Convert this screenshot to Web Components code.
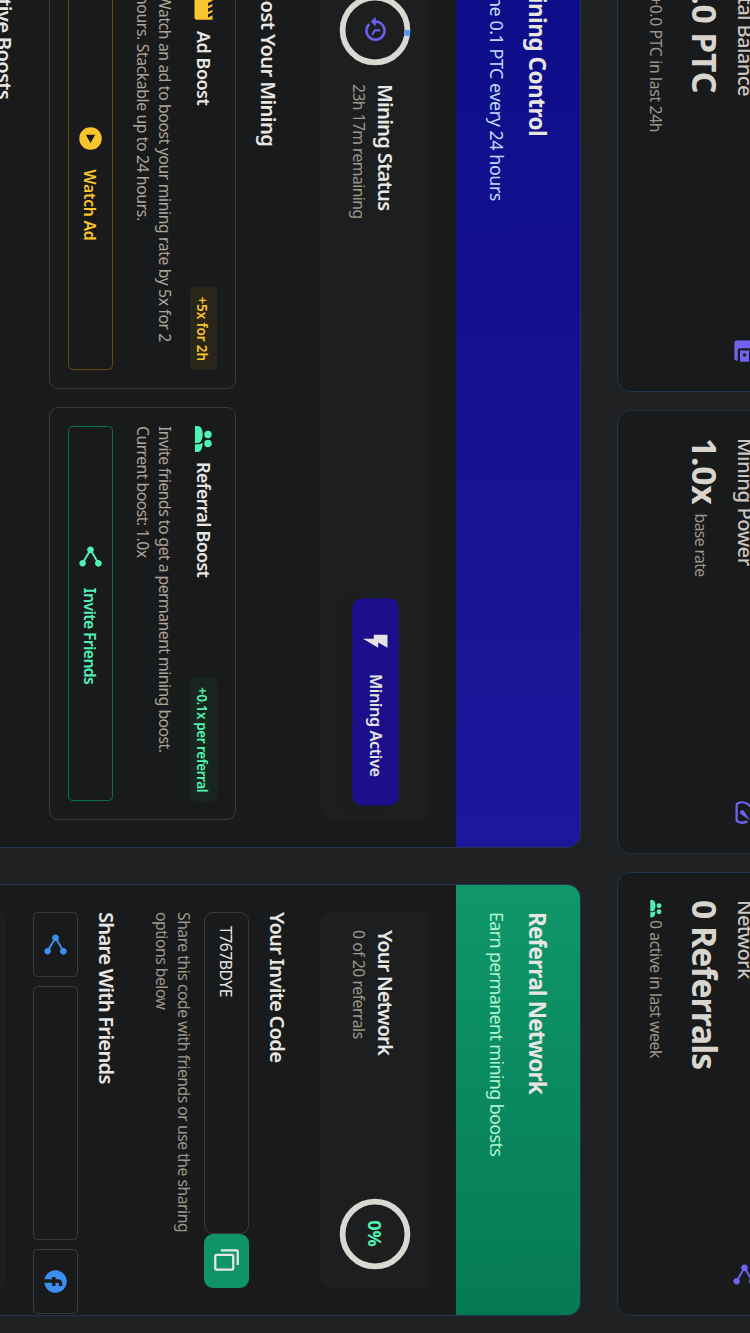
<!DOCTYPE html>
<html lang="en">
<head>
<meta charset="utf-8">
<title>Mining Dashboard</title>
<style>
html,body{margin:0;padding:0;background:#1f2122;overflow:hidden}
body{width:750px;height:1333px;font-family:"Noto Sans","Open Sans",sans-serif;color:#e8e6e3}
</style>
</head>
<body>
<mining-dashboard></mining-dashboard>
<script>
const define = (name, html, setup) => customElements.define(name, class extends HTMLElement {
  constructor(){
    super();
    const t = document.createElement('template');
    t.innerHTML = html;
    this.attachShadow({mode:'open'}).append(t.content.cloneNode(true));
  }
  connectedCallback(){ if (setup) setup(this, this.shadowRoot); }
});

const ICONS = {
  wallet:'M21 18v1c0 1.1-.9 2-2 2H5c-1.11 0-2-.9-2-2V5c0-1.1.89-2 2-2h14c1.1 0 2 .9 2 2v1h-9c-1.11 0-2 .9-2 2v8c0 1.1.89 2 2 2h9zm-9-2h10V8H12v8zm4-2.5c-.83 0-1.5-.67-1.5-1.5s.67-1.5 1.5-1.5 1.5.67 1.5 1.5-.67 1.5-1.5 1.5z',
  speed:'M20.38 8.57l-1.23 1.85a8 8 0 0 1-.22 7.58H5.07A8 8 0 0 1 15.58 6.85l1.85-1.23A10 10 0 0 0 3.35 19a2 2 0 0 0 1.72 1h13.85a2 2 0 0 0 1.74-1 10 10 0 0 0-.27-10.44zm-9.79 6.84a2 2 0 0 0 2.83 0l5.66-8.49-8.49 5.66a2 2 0 0 0 0 2.83z',
  share:'M18 16.08c-.76 0-1.44.3-1.96.77L8.91 12.7c.05-.23.09-.46.09-.7s-.04-.47-.09-.7l7.05-4.11c.54.5 1.25.81 2.04.81 1.66 0 3-1.34 3-3s-1.34-3-3-3-3 1.34-3 3c0 .24.04.47.09.7L8.04 9.81C7.5 9.31 6.79 9 6 9c-1.66 0-3 1.34-3 3s1.34 3 3 3c.79 0 1.5-.31 2.04-.81l7.12 4.16c-.05.21-.08.43-.08.65 0 1.61 1.31 2.92 2.92 2.92s2.92-1.31 2.92-2.92-1.31-2.92-2.92-2.92z',
  people:'M7.5 4.7a3.3 3.3 0 1 1 0 6.6a3.3 3.3 0 1 1 0-6.6zM15.6 4.7a3.3 3.3 0 1 1 0 6.6a3.3 3.3 0 1 1 0-6.6zM0 19.6V17C0 14 3.8 12.7 7.5 12.7S15 14 15 17v2.6zM16.2 19.6V17c0-1.7-.7-3-1.6-4.1C18.8 12.6 23.1 14 23.1 17v2.6z',
  history:'M13 3c-4.97 0-9 4.03-9 9H1l3.89 3.89.07.14L9 12H6c0-3.87 3.13-7 7-7s7 3.13 7 7-3.13 7-7 7c-1.93 0-3.68-.79-4.94-2.06l-1.42 1.42C8.27 19.99 10.51 21 13 21c4.97 0 9-4.03 9-9s-4.03-9-9-9zm-1 5v5l4.28 2.54.72-1.21-3.5-2.08V8H12z',
  flash:'M6.3 1.7v11.8h3.3v9.2l7.9-13h-4.7l4.7-8z',
  movie:'M18,4L20,8H17L15,4H13L15,8H12L10,4H8L10,8H7L5,4H4A2,2 0 0,0 2,6V18A2,2 0 0,0 4,20H20A2,2 0 0,0 22,18V4H18Z',
  play:'M12 2a10 10 0 1 0 0 20a10 10 0 1 0 0-20zM8.6 7.8L16 12L8.6 16.2z',
  copy:'M19,21H8V7H19M19,5H8A2,2 0 0,0 6,7V21A2,2 0 0,0 8,23H19A2,2 0 0,0 21,21V7A2,2 0 0,0 19,5M16,1H4A2,2 0 0,0 2,3V17H4V3H16V1Z',
  facebook:'M22 12c0-5.52-4.48-10-10-10S2 6.48 2 12c0 4.84 3.44 8.87 8 9.8V15H8v-3h2V9.5C10 7.57 11.57 6 13.5 6H16v3h-2c-.55 0-1 .45-1 1v2h3v3h-3v6.95c5.05-.5 9-4.76 9-9.95z'
};

define('ui-icon', `<style>
:host{display:block;flex:none;width:27px;height:27px}
svg{display:block;width:100%;height:100%;fill:currentColor;stroke:currentColor;stroke-width:var(--bold,0)}
</style><svg viewBox="0 0 24 24"><path fill-rule="evenodd"/></svg>`,
  (el, root) => root.querySelector('path').setAttribute('d', ICONS[el.getAttribute('name')]));

define('stat-card', `<style>
:host{display:flex;flex-direction:column;box-sizing:border-box;height:169px;padding:27px;border:1px solid #22344a;border-radius:13.5px;background:#191a1c}
.top{display:flex;justify-content:space-between;height:27px;font-size:20.25px;line-height:25px;font-weight:500;color:#cbc6bf}
ui-icon{color:#7162f2}
.value{display:flex;height:40.5px;margin-top:5.5px;font-size:33.75px;line-height:40.5px;font-weight:700;color:#d8d5cf;white-space:nowrap}
.sub{display:flex;align-items:center;margin-top:17.5px;height:22.5px;font-size:15.75px;line-height:22.5px;color:#9e9689;white-space:nowrap}
::slotted([slot=unit]){font-size:15.75px;font-weight:400;line-height:22.5px;margin:13.5px 0 0 9px;color:#9e9689}
</style>
<div class="top"><slot name="title"></slot><ui-icon></ui-icon></div>
<div class="value"><slot name="value"></slot><slot name="unit"></slot></div>
<div class="sub"><slot name="sub"></slot></div>`,
  (el, root) => {
    const i = document.createElement('ui-icon');
    i.setAttribute('name', el.getAttribute('icon'));
    root.querySelector('ui-icon').replaceWith(i);
  });
</script>
<script>
define('panel-card', `<style>
:host{display:block;box-sizing:border-box;height:900px;border:1px solid #22344a;border-radius:13.5px;background:#191a1c;overflow:hidden}
header{box-sizing:border-box;height:124px;padding:27px;background:var(--head);white-space:nowrap}
.t{font-size:22.5px;line-height:31.5px;font-weight:700}
.s{margin-top:11px;font-size:18px;line-height:27px;color:var(--sub)}
.body{padding:27px}
</style><header><div class="t"><slot name="title"></slot></div><div class="s"><slot name="sub"></slot></div></header>
<div class="body"><slot></slot></div>`);

define('status-box', `<style>
:host{display:flex;align-items:center;gap:18px;box-sizing:border-box;height:108px;padding:18px;border-radius:9px;background:#1d1e1f}
.txt{flex:1;white-space:nowrap}
.t{font-size:20.25px;line-height:33.5px;margin-bottom:-2px;font-weight:600}
.s{font-size:15.75px;line-height:22.5px;color:#9e9689}
</style><slot name="start"></slot><div class="txt"><div class="t"><slot name="title"></slot></div><div class="s"><slot name="sub"></slot></div></div><slot name="end"></slot>`);

define('progress-ring', `<style>
:host{display:grid;place-items:center;flex:none;width:72px;height:72px;font-size:18px;font-weight:700;color:#50f2b4}
svg,.c{grid-area:1/1}
svg{width:72px;height:72px;fill:none;stroke-width:8;transform:rotate(-90deg)}
.c{margin:0 1px 1px 0}
</style><svg viewBox="0 0 100 100"><circle cx="50" cy="50" r="45" stroke="#dbd7d2"/><circle class="p" cx="50" cy="50" r="45" stroke="#5b97ee" pathLength="100"/></svg><div class="c"><slot></slot></div>`,
  (el, root) => {
    const v = +el.getAttribute('value'), p = root.querySelector('.p');
    if (v) p.setAttribute('stroke-dasharray', v + ' 200'); else p.remove();
  });

define('mining-button', `<style>
:host{display:flex;align-items:center;justify-content:center;gap:18px;box-sizing:border-box;width:200px;height:45px;margin-bottom:1.5px;flex:none;border-radius:9px;background:#1d0f8b;color:#e6e4e1;font-size:15.75px;font-weight:600;white-space:nowrap;transform:scale(1.035);box-shadow:0 9px 14px -3px rgba(0,0,0,.1)}
span{margin-bottom:2px;letter-spacing:-.45px}
</style><ui-icon name="flash"></ui-icon><span><slot></slot></span>`);

define('outline-button', `<style>
:host{display:flex;align-items:center;justify-content:center;gap:18px;box-sizing:border-box;height:45px;border:1px solid var(--line,#3a3c3e);border-radius:4.5px;font-size:15.75px;font-weight:600;white-space:nowrap}
</style><slot></slot>`);

define('boost-card', `<style>
:host{display:block;box-sizing:border-box;height:187px;padding:18px;border:1px solid #37393b;border-radius:9px}
.h{display:flex;align-items:center;height:27px;white-space:nowrap}
.t{margin-left:9px;flex:1;font-size:18px;line-height:27px;font-weight:600}
.b{font-size:13.5px;line-height:18px;padding:5.5px 9px 3.5px;border-radius:4.5px;font-weight:600;background:var(--tint)}
.i,.b{color:var(--accent)}
p{margin:13.5px 0 18.5px;height:45px;font-size:15.75px;line-height:22px;color:#aca59b;letter-spacing:var(--ls)}
outline-button{color:var(--accent)}
</style><div class="h"><div class="i"><slot name="icon"></slot></div><div class="t"><slot name="title"></slot></div><div class="b"><slot name="badge"></slot></div></div>
<p><slot></slot></p><outline-button><slot name="action-icon"></slot><span><slot name="action"></slot></span></outline-button>`);

define('section-title', `<style>:host{display:block;font-size:20.25px;line-height:33px;margin-bottom:-1.5px;font-weight:600;white-space:nowrap}</style><slot></slot>`);

define('invite-code', `<style>
:host{display:flex;height:45px}
.f{box-sizing:border-box;width:322px;padding:0 13px;border:1px solid #37393b;border-radius:9px;font-size:15.75px;line-height:44px;letter-spacing:-.5px}
.c{flex:1;display:grid;place-items:center;border-radius:9px;background:#0f9467}
ui-icon{margin-right:1px}
</style><div class="f"><slot></slot></div><div class="c"><ui-icon name="copy"></ui-icon></div>`);

define('mining-dashboard', `<style>
:host{display:block;width:750px;height:1333px;overflow:hidden}
.stage{width:1333px;height:750px;overflow:hidden;transform-origin:0 0;transform:translateX(750px) rotate(90deg);background:#1f2122}
.page{width:1368px;margin:-36px 0 0 -52px;display:flow-root}
.stats{display:grid;grid-template-columns:repeat(3,444px);gap:18px}
.main{display:grid;grid-template-columns:900px 432px;gap:36px;margin-top:36px}
.mine{--head:linear-gradient(90deg,#0c0d88,#1e169b);--sub:#c0dafb}
.ref{--head:linear-gradient(90deg,#0f9769,#057a55);--sub:#b0f5d0}
.small{width:18px;height:18px;color:#50f2b4;margin-right:2px}
.boosts{display:grid;grid-template-columns:413px 413px;gap:18px;margin-top:17.5px}
.ad{--accent:#fac52c;--tint:#2a2519;--line:#674a06;--ls:-.39px}
.rf{--accent:#50f2b4;--tint:#19261f;--line:#08704e;--ls:-.53px}
.purple{color:#7060f3;--bold:.35}
.blue{color:#3b8ff0}
.hint{margin:9px 0 27px;height:45px;font-size:15.75px;line-height:22px;color:#9e9689;letter-spacing:-.51px}
.share{display:grid;grid-template-columns:65px 254px 65px;gap:9px;margin-top:13px}
.next{height:60px;margin-top:27px;border-radius:9px;background:#1d1e1f}
</style>
<div class="stage"><div class="page">
<div class="stats">
<stat-card icon="wallet"><span slot="title" style="letter-spacing:-.65px">Total Balance</span><span slot="value" style="letter-spacing:-.15px">0.0 PTC</span><ui-icon slot="sub" class="small" name="share" style="visibility:hidden"></ui-icon><span slot="sub" style="letter-spacing:-.35px">+0.0 PTC in last 24h</span></stat-card>
<stat-card icon="speed"><span slot="title" style="letter-spacing:-.48px">Mining Power</span><span slot="value" style="letter-spacing:-.25px">1.0x</span><span slot="unit" style="letter-spacing:-.65px">base rate</span></stat-card>
<stat-card icon="share"><span slot="title" style="letter-spacing:-.74px">Network</span><span slot="value" style="letter-spacing:-1px">0 Referrals</span><ui-icon slot="sub" class="small" name="people"></ui-icon><span slot="sub" style="letter-spacing:-.43px">0 active in last week</span></stat-card>
</div>
<div class="main">
<panel-card class="mine"><span slot="title" style="letter-spacing:-.5px">Mining Control</span><span slot="sub" style="letter-spacing:-.5px">Mine 0.1 PTC every 24 hours</span>
<status-box><progress-ring slot="start" value="3"><ui-icon class="purple" name="history"></ui-icon></progress-ring><span slot="title" style="letter-spacing:-.77px">Mining Status</span><span slot="sub" style="letter-spacing:-.59px">23h 17m remaining</span><mining-button slot="end">Mining Active</mining-button></status-box>
<section-title style="margin-top:36px;letter-spacing:-.65px">Boost Your Mining</section-title>
<div class="boosts">
<boost-card class="ad"><ui-icon slot="icon" name="movie"></ui-icon><span slot="title" style="letter-spacing:-.5px">Ad Boost</span><span slot="badge" style="letter-spacing:-.1px">+5x for 2h</span>Watch an ad to boost your mining rate by 5x for 2 hours. Stackable up to 24 hours.<ui-icon slot="action-icon" name="play"></ui-icon><span slot="action" style="letter-spacing:-.25px">Watch Ad</span></boost-card>
<boost-card class="rf"><ui-icon slot="icon" name="people"></ui-icon><span slot="title" style="letter-spacing:-.71px">Referral Boost</span><span slot="badge" style="letter-spacing:-.46px">+0.1x per referral</span>Invite friends to get a permanent mining boost. Current boost: 1.0x<ui-icon slot="action-icon" name="share"></ui-icon><span slot="action" style="letter-spacing:-.64px">Invite Friends</span></boost-card>
</div>
<section-title style="margin-top:28px;letter-spacing:-.73px">Active Boosts</section-title>
</panel-card>
<panel-card class="ref"><span slot="title" style="letter-spacing:-.81px">Referral Network</span><span slot="sub" style="letter-spacing:-.68px">Earn permanent mining boosts</span>
<status-box><span slot="title" style="letter-spacing:-1px">Your Network</span><span slot="sub" style="letter-spacing:-.47px">0 of 20 referrals</span><progress-ring slot="end" value="0">0%</progress-ring></status-box>
<section-title style="margin-top:27px;letter-spacing:-.81px">Your Invite Code</section-title>
<invite-code style="margin-top:13.5px">T767BDYE</invite-code>
<div class="hint">Share this code with friends or use the sharing<br>options below</div>
<section-title style="letter-spacing:-.78px">Share With Friends</section-title>
<div class="share"><outline-button class="blue"><ui-icon name="share"></ui-icon></outline-button><outline-button></outline-button><outline-button class="blue"><ui-icon name="facebook"></ui-icon></outline-button></div>
<div class="next"></div>
</panel-card>
</div></div></div>`);
</script>
</body>
</html>
